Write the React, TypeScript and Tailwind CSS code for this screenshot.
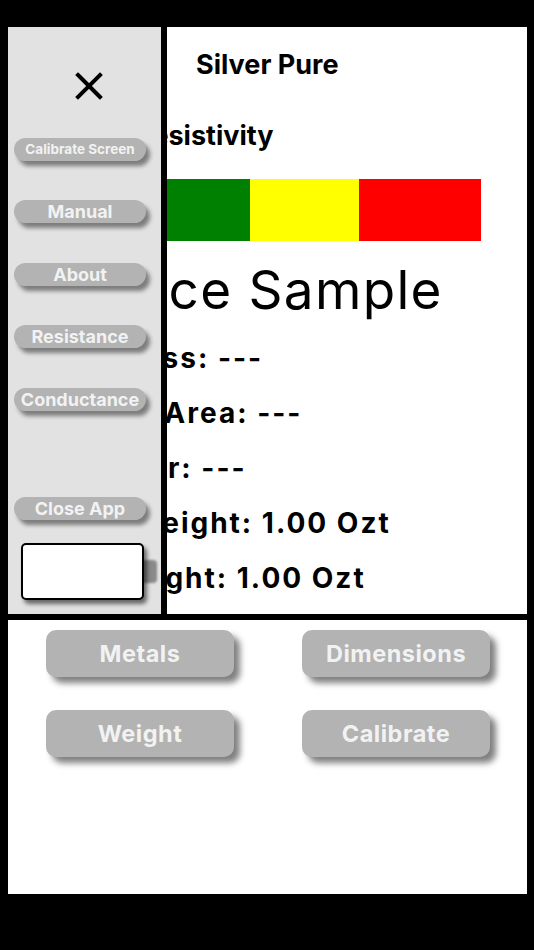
const DRAWER_ITEMS = [
  { label: 'Calibrate Screen', small: true, mt: 'mt-[38px]' },
  { label: 'Manual', small: false, mt: 'mt-[39px]' },
  { label: 'About', small: false, mt: 'mt-[40px]' },
  { label: 'Resistance', small: false, mt: 'mt-[39px]' },
  { label: 'Conductance', small: false, mt: 'mt-[40px]' },
]

const READINGS = [
  { text: 'Thickness: ---', ml: 'ml-[30px]' },
  { text: 'Surface Area: ---', ml: 'ml-[26px]' },
  { text: 'Diameter: ---', ml: 'ml-[33px]' },
  { text: 'Total Weight: 1.00 Ozt', ml: 'ml-[38px]' },
  { text: 'Ref Weight: 1.00 Ozt', ml: 'ml-[39px]' },
]

export default function App() {
  return (
    <div className="w-[534px] h-[950px] bg-black pt-[27px] pl-[8px] pr-[7px] font-['Inter',sans-serif]">
      <div className="flex flex-col">
        <div className="relative h-[587px] bg-white overflow-hidden">
          <Content />
          <Drawer />
        </div>
        <div className="h-[6px] bg-black" />
        <div className="h-[274px] bg-white">
          <ActionGrid />
        </div>
      </div>
    </div>
  )
}

function Content() {
  return (
    <div className="flex flex-col text-black">
      <div className="mt-[21px] ml-[188px] text-[27px] font-bold leading-[34px]">Silver Pure</div>
      <div className="mt-[37px] ml-[127px] text-[27px] font-bold leading-[34px]">Resistivity</div>
      <div className="mt-[26px] ml-[40px] flex h-[62px] w-[433px]">
        <div className="flex-1 bg-[#008000]" />
        <div className="w-[109px] bg-[#ffff00]" />
        <div className="w-[122px] bg-[#ff0000]" />
      </div>
      <div className="mt-[18px] ml-[-43px] text-[53px] leading-[62px] tracking-[1.3px] whitespace-nowrap">
        Reference Sample
      </div>
      <div className="mt-[10px] flex flex-col">
        {READINGS.map((r) => (
          <div key={r.text} className={`${r.ml} text-[28px] font-bold leading-[55px] tracking-[2px] whitespace-nowrap`}>
            {r.text}
          </div>
        ))}
      </div>
    </div>
  )
}

function Drawer() {
  return (
    <div className="absolute left-0 top-0 h-full w-[159px] bg-[#e2e2e2] border-r-[6px] border-black flex flex-col pl-[6px]">
      <svg className="mt-[45px] ml-[61px]" width="28" height="28" viewBox="0 0 28 28">
        <path d="M3 3 L25 25 M25 3 L3 25" stroke="black" strokeWidth="4" strokeLinecap="square" />
      </svg>
      {DRAWER_ITEMS.map((item) => (
        <button
          key={item.label}
          className={`${item.mt} h-[23px] w-[132px] rounded-full bg-[#b3b3b3] text-[#f2f2f2] font-bold shadow-[4px_5px_4px_rgba(0,0,0,0.45)] ${
            item.small ? 'text-[13.5px]' : 'text-[18px]'
          } leading-[23px] whitespace-nowrap`}
        >
          {item.label}
        </button>
      ))}
      <button className="mt-[86px] h-[23px] w-[132px] rounded-full bg-[#b3b3b3] text-[#f2f2f2] text-[18px] leading-[23px] font-bold shadow-[4px_5px_4px_rgba(0,0,0,0.45)]">
        Close App
      </button>
      <div className="relative mt-[23px] ml-[7px] h-[57px] w-[123px]">
        <div className="absolute right-[-13px] top-[17px] h-[23px] w-[16px] rounded-[4px] bg-[#8a8a8a] blur-[1px]" />
        <div className="relative h-full w-full rounded-[5px] border-2 border-black bg-white shadow-[3px_4px_4px_rgba(0,0,0,0.55)]" />
      </div>
    </div>
  )
}

function ActionGrid() {
  const rows = [
    ['Metals', 'Dimensions'],
    ['Weight', 'Calibrate'],
  ]
  return (
    <div className="flex flex-col gap-[33px] pt-[10px] pl-[38px]">
      {rows.map((row) => (
        <div key={row[0]} className="flex gap-[68px]">
          {row.map((label) => (
            <button
              key={label}
              className="h-[47px] w-[188px] rounded-[10px] bg-[#b3b3b3] text-[#f2f2f2] text-[23.5px] tracking-[0.5px] font-bold shadow-[6px_6px_6px_rgba(0,0,0,0.5)]"
            >
              {label}
            </button>
          ))}
        </div>
      ))}
    </div>
  )
}
